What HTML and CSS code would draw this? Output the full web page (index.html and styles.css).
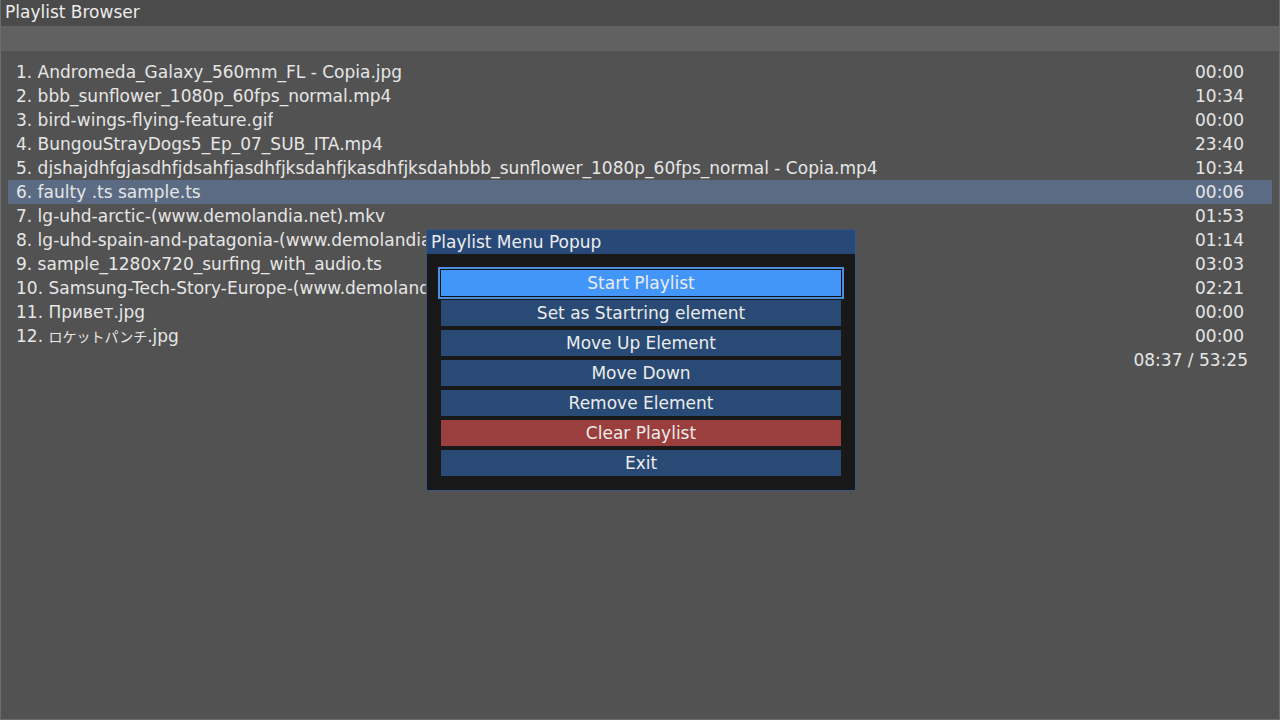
FILE: index.html
```html
<!DOCTYPE html>
<html lang="en">
<head>
<meta charset="utf-8">
<title>Playlist Browser</title>
<link rel="stylesheet" href="styles.css">
</head>
<body>
<div class="window">
  <div class="titlebar">Playlist Browser</div>
  <div class="toolbar"></div>
  <div class="list">
    <div class="row"><span class="name">1. Andromeda_Galaxy_560mm_FL - Copia.jpg</span><span class="time">00:00</span></div>
    <div class="row"><span class="name">2. bbb_sunflower_1080p_60fps_normal.mp4</span><span class="time">10:34</span></div>
    <div class="row"><span class="name">3. bird-wings-flying-feature.gif</span><span class="time">00:00</span></div>
    <div class="row"><span class="name">4. BungouStrayDogs5_Ep_07_SUB_ITA.mp4</span><span class="time">23:40</span></div>
    <div class="row"><span class="name">5. djshajdhfgjasdhfjdsahfjasdhfjksdahfjkasdhfjksdahbbb_sunflower_1080p_60fps_normal - Copia.mp4</span><span class="time">10:34</span></div>
    <div class="row selected"><span class="name">6. faulty .ts sample.ts</span><span class="time">00:06</span></div>
    <div class="row"><span class="name">7. lg-uhd-arctic-(www.demolandia.net).mkv</span><span class="time">01:53</span></div>
    <div class="row"><span class="name">8. lg-uhd-spain-and-patagonia-(www.demolandia.net).mkv</span><span class="time">01:14</span></div>
    <div class="row"><span class="name">9. sample_1280x720_surfing_with_audio.ts</span><span class="time">03:03</span></div>
    <div class="row"><span class="name">10. Samsung-Tech-Story-Europe-(www.demolandia.net).mkv</span><span class="time">02:21</span></div>
    <div class="row"><span class="name">11. Привет.jpg</span><span class="time">00:00</span></div>
    <div class="row"><span class="name">12. <span class="cjk">ロケットパンチ</span>.jpg</span><span class="time">00:00</span></div>
    <div class="total">08:37 / 53:25</div>
  </div>

  <div class="popup">
    <div class="popup-title">Playlist Menu Popup</div>
    <div class="popup-body">
      <button class="btn focused">Start Playlist</button>
      <button class="btn">Set as Startring element</button>
      <button class="btn">Move Up Element</button>
      <button class="btn">Move Down</button>
      <button class="btn">Remove Element</button>
      <button class="btn danger">Clear Playlist</button>
      <button class="btn">Exit</button>
    </div>
  </div>
</div>
</body>
</html>
```

FILE: styles.css
```css
html, body {
  margin: 0;
  padding: 0;
  width: 1280px;
  height: 720px;
  overflow: hidden;
  background: #525252;
}

body {
  font-family: "DejaVu Sans", "Noto Sans CJK JP", sans-serif;
  font-size: 17px;
  color: #e6e6e6;
}

.window {
  position: relative;
  box-sizing: border-box;
  width: 1280px;
  height: 720px;
  border: 1px solid #6c6c6c;
  border-top: none;
  background: #525252;
  display: flex;
  flex-direction: column;
}

.titlebar {
  height: 26px;
  line-height: 25px;
  padding-left: 4px;
  background: #4b4b4b;
  color: #ececec;
}

.toolbar {
  height: 25px;
  background: #616161;
}

.list {
  padding: 9px 7px 0 7px;
  display: flex;
  flex-direction: column;
}

.row {
  height: 24px;
  line-height: 24px;
  display: flex;
  justify-content: space-between;
  padding: 0 28px 0 8px;
  white-space: nowrap;
  overflow: hidden;
}

.row.selected {
  background: #5b6b83;
}

.name {
  overflow: hidden;
}

/* the CJK glyph set is rasterised smaller than the Latin one */
.cjk {
  font-family: "Noto Sans CJK JP", sans-serif;
  font-size: 14px;
}

.time {
  flex: none;
}

.total {
  height: 24px;
  line-height: 24px;
  text-align: right;
  padding-right: 24px;
}

.popup {
  position: absolute;
  z-index: 1;
  left: 425px;
  top: 229px;
  width: 430px;
  height: 262px;
  box-sizing: border-box;
  border: 1px solid #3c5680;
  background: #181818;
  display: flex;
  flex-direction: column;
}

.popup-title {
  height: 24px;
  line-height: 24px;
  padding-left: 4px;
  background: #284978;
  color: #ececec;
}

.popup-body {
  padding: 16px 14px 0 14px;
  display: flex;
  flex-direction: column;
  gap: 4px;
}

.btn {
  height: 26px;
  border: none;
  margin: 0;
  padding: 0;
  background: #284a74;
  color: #ececec;
  font-family: inherit;
  font-size: 17px;
  line-height: 26px;
  text-align: center;
}

.btn.focused {
  background: #4296fa;
  outline: 2px solid #4a8fe0;
  outline-offset: 1px;
  box-shadow: 0 0 0 1px #101010;
}

.btn.danger {
  background: #9b3e3e;
}
```
